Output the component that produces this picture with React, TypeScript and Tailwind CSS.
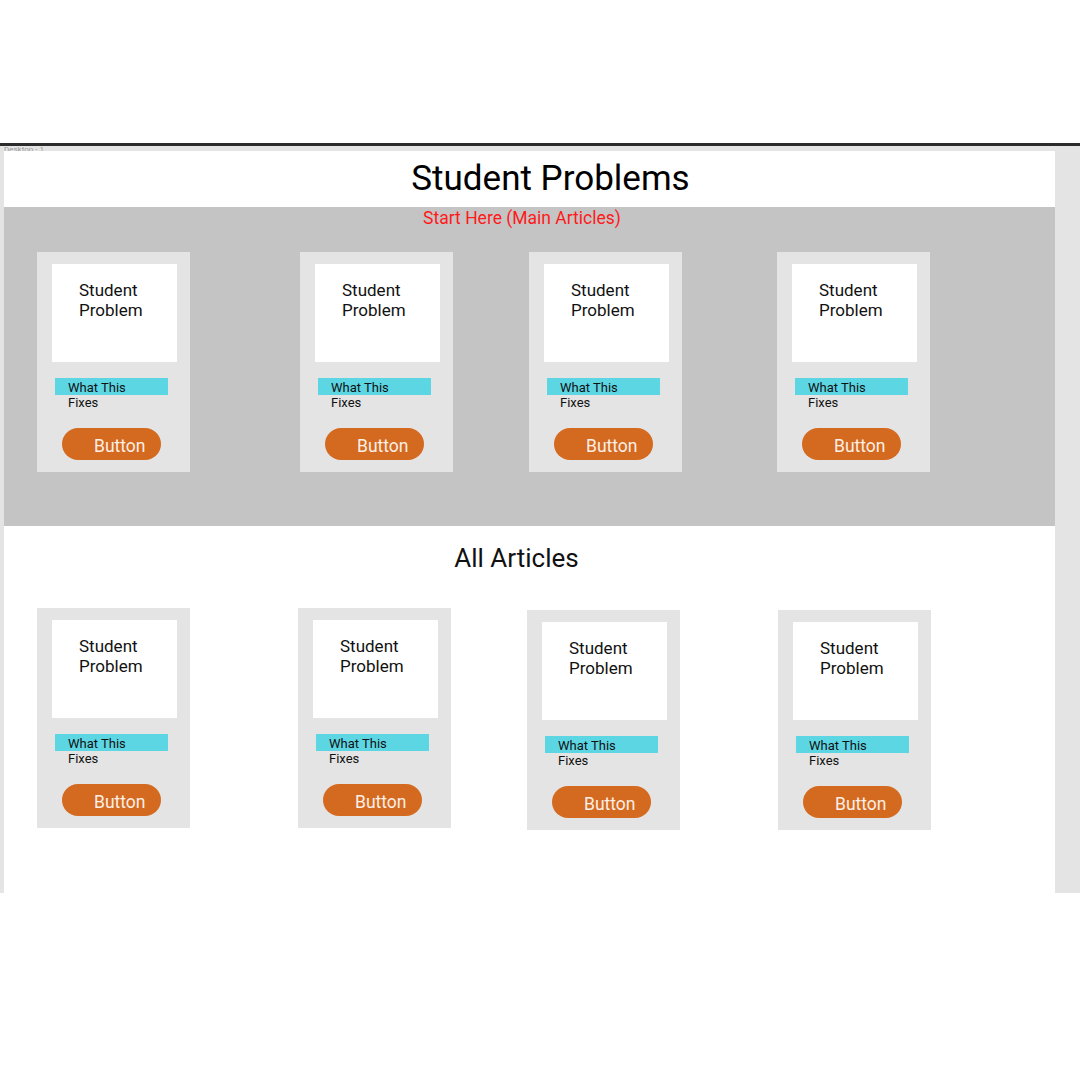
const topCards = [
  { id: 1, ml: 'ml-[33px]', mt: 'mt-0' },
  { id: 2, ml: 'ml-[110px]', mt: 'mt-0' },
  { id: 3, ml: 'ml-[76px]', mt: 'mt-0' },
  { id: 4, ml: 'ml-[95px]', mt: 'mt-0' },
];

const bottomCards = [
  { id: 1, ml: 'ml-[33px]', mt: 'mt-0' },
  { id: 2, ml: 'ml-[108px]', mt: 'mt-0' },
  { id: 3, ml: 'ml-[76px]', mt: 'mt-[2px]' },
  { id: 4, ml: 'ml-[98px]', mt: 'mt-[2px]' },
];

function ProblemCard({ className }: { className: string }) {
  return (
    <div className={`w-[153px] h-[220px] shrink-0 bg-[#e4e4e4] pt-[12px] pl-[15px] ${className}`}>
      {/* Problem tile */}
      <div className="w-[125px] h-[98px] bg-white pt-[16px] pl-[27px] text-[17px] leading-[20px] text-[#111]">
        Student
        <br />
        Problem
      </div>

      {/* Fix label, text spills below the bar */}
      <div className="mt-[16px] ml-[3px] w-[113px] h-[17px] bg-[#5dd6e4] pl-[13px] pt-[2px] text-[13px] leading-[15px] text-[#111]">
        What This
        <br />
        Fixes
      </div>

      <button className="mt-[33px] ml-[10px] w-[99px] h-[32px] rounded-full bg-[#d46a20] pl-[32px] pt-[4px] flex items-center text-[17.5px] leading-[20px] text-[#fbefe6]">
        Button
      </button>
    </div>
  );
}

export default function App() {
  return (
    <div className="w-[1080px] h-[1080px] bg-white font-['Roboto',sans-serif]">
      <div className="h-[143px]" />
      <div className="h-[3px] bg-[#2b2b2b]" />

      {/* Canvas frame */}
      <div className="h-[747px] bg-[#e4e4e4] flex flex-col">
        <div className="h-[5px] overflow-hidden pl-[4px] text-[8px] leading-[8px] text-[#9a9a9a]">Desktop - 1</div>
        <div className="flex h-[742px]">
          <div className="w-[4px]" />
          <div className="w-[1051px] bg-white flex flex-col">
            {/* Header */}
            <div className="h-[56px] pt-[10px] pl-[42px] text-center text-[35px] leading-[35px] text-black">
              Student Problems
            </div>

            {/* Main articles */}
            <div className="h-[319px] bg-[#c4c4c4]">
              <div className="pt-[1px] pr-[15px] text-center text-[17.5px] leading-[20px] text-[#ff1a1a]">
                Start Here (Main Articles)
              </div>
              <div className="mt-[24px] flex items-start">
                {topCards.map((c) => (
                  <ProblemCard key={c.id} className={`${c.ml} ${c.mt}`} />
                ))}
              </div>
            </div>

            {/* All articles */}
            <div className="pt-[17px] pr-[26px] text-center text-[26px] leading-[30px] text-[#111]">
              All Articles
            </div>
            <div className="mt-[35px] flex items-start">
              {bottomCards.map((c) => (
                <ProblemCard key={c.id} className={`${c.ml} ${c.mt}`} />
              ))}
            </div>
          </div>
          <div className="w-[25px]" />
        </div>
      </div>
    </div>
  );
}
